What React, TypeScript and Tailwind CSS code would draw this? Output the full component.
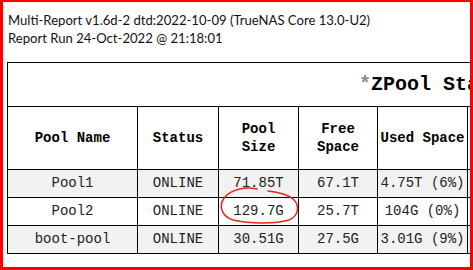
import React from 'react';

type PoolRow = { name: string; status: string; size: string; free: string; used: string };

const pools: PoolRow[] = [
    { name: 'Pool1', status: 'ONLINE', size: '71.85T', free: '67.1T', used: '4.75T (6%)' },
    { name: 'Pool2', status: 'ONLINE', size: '129.7G', free: '25.7T', used: '104G (0%)' },
    { name: 'boot-pool', status: 'ONLINE', size: '30.51G', free: '27.5G', used: '3.01G (9%)' },
];

const mono = { fontFamily: '"Liberation Mono", "Courier New", monospace' };

const App = () => {
    return (
        <div className="relative w-[473px] h-[270px] overflow-hidden bg-white">
            <div className="w-[473px] h-[270px] border-[3px] border-t-2 border-[#ff0000] overflow-hidden pl-[5px] pt-[10px]">
                <div className="text-[13.1px] leading-[17.5px] text-[#111]" style={{ fontFamily: 'Lato, "Open Sans", sans-serif' }}>
                    <div>Multi-Report v1.6d-2 dtd:2022-10-09 (TrueNAS Core 13.0-U2)</div>
                    <div>Report Run 24-Oct-2022 @ 21:18:01</div>
                </div>

                <table className="mt-[15px] -ml-px border-collapse table-fixed w-[1040px]" style={mono}>
                    <colgroup>
                        <col className="w-[130px]" />
                        <col className="w-[81px]" />
                        <col className="w-[80px]" />
                        <col className="w-[79px]" />
                        <col className="w-[90px]" />
                        <col />
                        <col />
                        <col />
                    </colgroup>
                    <thead>
                        <tr className="h-[44px]">
                            <th colSpan={8} className="border border-black text-[20px] font-bold text-center text-black">
                                <span className="text-[#8a8a8a]">*</span>ZPool Sta
                                <span className="invisible">tus Report Summary</span>
                            </th>
                        </tr>
                        <tr className="h-[63px] text-[14px] leading-[18px] font-bold text-black">
                            <th className="border border-black font-bold">Pool Name</th>
                            <th className="border border-black font-bold">Status</th>
                            <th className="border border-black font-bold">Pool<br />Size</th>
                            <th className="border border-black font-bold">Free<br />Space</th>
                            <th className="border border-black font-bold px-0">Used Space</th>
                            <th className="border border-black" />
                            <th className="border border-black" />
                            <th className="border border-black" />
                        </tr>
                    </thead>
                    <tbody className="text-[14px] text-[#222]">
                        {pools.map((p, i) => (
                            <tr key={p.name} className={i % 2 === 0 ? 'h-[28px] bg-[#f2f2f2]' : 'h-[28px] bg-white'}>
                                <td className="border border-black text-center">{p.name}</td>
                                <td className="border border-black text-center">{p.status}</td>
                                <td className="border border-black text-center">{p.size}</td>
                                <td className="border border-black text-center">{p.free}</td>
                                <td className="border border-black text-center whitespace-pre">{p.used}</td>
                                <td className="border border-black" />
                                <td className="border border-black" />
                                <td className="border border-black" />
                            </tr>
                        ))}
                    </tbody>
                </table>
            </div>

            {/* hand drawn circle around Pool2 size */}
            <svg className="absolute left-0 top-0 pointer-events-none" width="473" height="270" viewBox="0 0 473 270">
                <path
                    d="M257 189 C245 186 231 190 225 197 C218 205 221 216 233 220 C250 224 276 224 289 220 C299 216 300 205 293 199 C287 194 277 192 268 191"
                    fill="none"
                    stroke="#e3261f"
                    strokeWidth="1.5"
                    strokeLinecap="round"
                />
            </svg>
        </div>
    );
};

export default App;
